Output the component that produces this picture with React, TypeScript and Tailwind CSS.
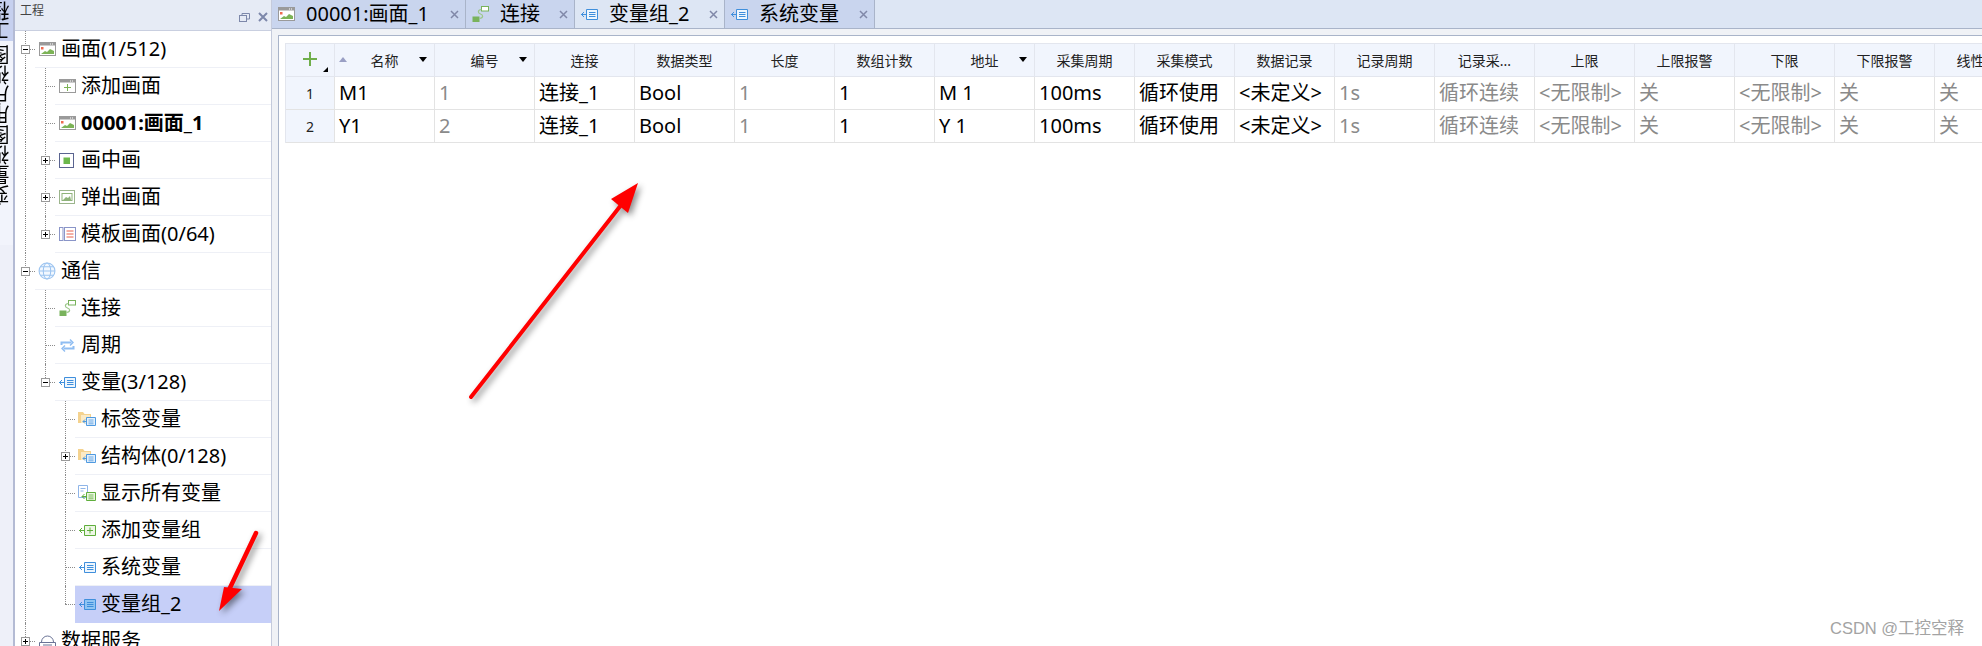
import type { ReactNode } from 'react';

const cjk = "font-['Noto_Sans','Noto_Sans_CJK_SC',sans-serif]";

// 树节点里的小图标
function ScreenIcon({ add }: { add?: boolean }) {
  return (
    <svg width="17" height="14" viewBox="0 0 17 14">
      <rect x="0.5" y="0.5" width="16" height="13" fill="#fff" stroke="#9a9a9a" />
      <rect x="1" y="1" width="15" height="2.5" fill="#9a9a9a" />
      <rect x="11" y="1.5" width="1" height="1" fill="#fff" />
      <rect x="13" y="1.5" width="1" height="1" fill="#fff" />
      {add ? (
        <path d="M8.500 5v7M5 8.500h7" stroke="#7cb356" strokeWidth="1" fill="none" />
      ) : (
        <>
          <rect x="2" y="5" width="2.5" height="2.5" fill="#ee6a50" />
          <path d="M2 12l4-3 2 1 3-3 4 2v3z" fill="#7cb356" />
        </>
      )}
    </svg>
  );
}

function PipIcon() {
  return (
    <svg width="16" height="15" viewBox="0 0 16 15">
      <rect x="0.5" y="0.5" width="14" height="14" fill="#fff" stroke="#5a6490" />
      <rect x="4.5" y="4.5" width="6.5" height="6.5" fill="#6cb84c" />
    </svg>
  );
}

function PopupIcon() {
  return (
    <svg width="16" height="14" viewBox="0 0 16 14">
      <rect x="0.5" y="0.5" width="15" height="13" fill="#fff" stroke="#9cb58c" />
      <rect x="3" y="3.5" width="10" height="7" fill="#fff" stroke="#8fb37a" />
      <path d="M4 10l3-3 2 1 2-2 1 4z" fill="#8fb37a" />
    </svg>
  );
}

function TemplateIcon() {
  return (
    <svg width="17" height="14" viewBox="0 0 17 14" fill="none">
      <rect x="0.5" y="0.5" width="3.5" height="13" stroke="#8a95c8" />
      <rect x="5.5" y="0.5" width="11" height="13" stroke="#8a95c8" />
      <path d="M7.500 4h7M7.500 7h7M7.500 10h7" stroke="#e8604c" />
    </svg>
  );
}

function GlobeIcon() {
  return (
    <svg width="18" height="18" viewBox="0 0 17 17" fill="none" stroke="#9cc4f0">
      <circle cx="8.5" cy="8.5" r="7.5" fill="#f2f8ff" />
      <ellipse cx="8.5" cy="8.5" rx="3.5" ry="7.5" />
      <path d="M1 8.500h15M2 4.500h13M2 12.500h13" />
    </svg>
  );
}

function ConnIcon() {
  return (
    <svg width="17" height="17" viewBox="0 0 17 17" fill="none">
      <rect x="0.5" y="10.5" width="7" height="5.5" fill="#79b35c" />
      <rect x="9.5" y="0.5" width="7" height="4.5" stroke="#79b35c" fill="#fff" />
      <path d="M9.500 3.500c-4 .5-4 3.500-1 4.500s3 4-1 4.500" stroke="#9cc78a" strokeWidth="1.2" />
    </svg>
  );
}

function CycleIcon() {
  return (
    <svg width="15" height="15" viewBox="0 0 15 15" fill="none" stroke="#8fbdf2" strokeWidth="2">
      <path d="M1.500 7V4.500h10" />
      <path d="M13.500 8v2.500h-10" />
      <path d="M10 1.500l3 3-3 3M5 7.500l-3 3 3 3" strokeWidth="1.4" />
    </svg>
  );
}

function VarIcon({ color = '#3f8fdc', fill = '#eef6fd' }: { color?: string; fill?: string }) {
  return (
    <svg width="17" height="11" viewBox="0 0 17 11" fill="none">
      <path d="M5.500.5h11v10h-11z" fill={fill} stroke={color} />
      <path d="M8 3.500h6.500M8 5.500h6.500M8 7.500h6.500" stroke={color} />
      <path d="M0 5.500h5.500M3 3l-2.500 2.500L3 8" stroke={color} />
    </svg>
  );
}

function AddVarIcon() {
  return (
    <svg width="17" height="11" viewBox="0 0 17 11" fill="none">
      <path d="M5.500.5h11v10h-11z" fill="#eef7e6" stroke="#5fae3c" />
      <path d="M11 2.500v6M8 5.500h6" stroke="#5fae3c" />
      <path d="M0 5.500h5.500M3 3l-2.500 2.500L3 8" stroke="#5fae3c" />
    </svg>
  );
}

function FolderVarIcon() {
  return (
    <svg width="18" height="16" viewBox="0 0 18 16" fill="none">
      <path d="M0 1h5l1.500 2H13v9H0z" fill="#f4d28e" />
      <path d="M3 4h9v8H3z" fill="#fbeac6" />
      <path d="M8.500 6.500h9v8h-9z" fill="#e4f0fc" stroke="#4f9ae0" />
      <path d="M10.500 9h5M10.500 11h5M10.500 12.800h5" stroke="#4f9ae0" strokeWidth="0.8" />
      <path d="M5 10.500h4M7 8.500l-2 2 2 2" stroke="#4f9ae0" />
    </svg>
  );
}

function AllVarIcon() {
  return (
    <svg width="18" height="17" viewBox="0 0 18 17" fill="none">
      <path d="M.5.500h9v12h-9z" fill="#fff" stroke="#8fb5e8" />
      <path d="M2.500 3.500h5M2.500 6h3" stroke="#8fb5e8" />
      <path d="M8.500 7.500h9v8h-9z" fill="#eaf6e2" stroke="#5fae3c" />
      <path d="M10.500 10h5M10.500 12h5M10.500 13.800h5" stroke="#5fae3c" strokeWidth="0.8" />
      <path d="M4 11.500h5M6.500 9l-2.500 2.500L6.500 14" stroke="#5fae3c" />
    </svg>
  );
}

function CloudIcon() {
  return (
    <svg width="17" height="17" viewBox="0 0 17 17" fill="none" stroke="#6a7396">
      <path d="M2.500 9a6 6 0 0 1 12 0" />
      <path d="M.5 9.500h16v5H.5z" fill="#fff" />
      <path d="M4 12h9" />
    </svg>
  );
}

type Row = {
  level: number;
  label: string;
  icon: ReactNode;
  exp?: '+' | '-';
  // 每一层的引导线: pipe = 贯穿, tee = 贯穿带横线, end = 到中间为止, none = 无
  guides: ('pipe' | 'tee' | 'end' | 'none')[];
  bold?: boolean;
  selected?: boolean;
};

const rows: Row[] = [
  { level: 0, label: '画面(1/512)', icon: <ScreenIcon />, exp: '-', guides: ['tee'] },
  { level: 1, label: '添加画面', icon: <ScreenIcon add />, guides: ['pipe', 'tee'] },
  { level: 1, label: '00001:画面_1', icon: <ScreenIcon />, guides: ['pipe', 'tee'], bold: true },
  { level: 1, label: '画中画', icon: <PipIcon />, exp: '+', guides: ['pipe', 'tee'] },
  { level: 1, label: '弹出画面', icon: <PopupIcon />, exp: '+', guides: ['pipe', 'tee'] },
  { level: 1, label: '模板画面(0/64)', icon: <TemplateIcon />, exp: '+', guides: ['pipe', 'end'] },
  { level: 0, label: '通信', icon: <GlobeIcon />, exp: '-', guides: ['tee'] },
  { level: 1, label: '连接', icon: <ConnIcon />, guides: ['pipe', 'tee'] },
  { level: 1, label: '周期', icon: <CycleIcon />, guides: ['pipe', 'tee'] },
  { level: 1, label: '变量(3/128)', icon: <VarIcon />, exp: '-', guides: ['pipe', 'end'] },
  { level: 2, label: '标签变量', icon: <FolderVarIcon />, guides: ['pipe', 'none', 'tee'] },
  { level: 2, label: '结构体(0/128)', icon: <FolderVarIcon />, exp: '+', guides: ['pipe', 'none', 'tee'] },
  { level: 2, label: '显示所有变量', icon: <AllVarIcon />, guides: ['pipe', 'none', 'tee'] },
  { level: 2, label: '添加变量组', icon: <AddVarIcon />, guides: ['pipe', 'none', 'tee'] },
  { level: 2, label: '系统变量', icon: <VarIcon />, guides: ['pipe', 'none', 'tee'] },
  { level: 2, label: '变量组_2', icon: <VarIcon fill="#8fc4f2" />, guides: ['pipe', 'none', 'end'], selected: true },
  { level: 0, label: '数据服务', icon: <CloudIcon />, exp: '+', guides: ['end'] },
];

function Guide({ type, exp }: { type: string; exp?: '+' | '-' }) {
  return (
    <div className="relative h-full w-[20px] shrink-0">
      {type !== 'none' && (
        <div
          className={`absolute left-[10px] top-0 border-l border-dotted border-[#8c8c8c] ${
            type === 'end' ? 'h-[18px]' : 'h-full'
          }`}
        />
      )}
      {(type === 'tee' || type === 'end') && (
        <div className="absolute left-[10px] top-[18px] w-[10px] border-t border-dotted border-[#8c8c8c]" />
      )}
      {exp && (
        <div className="absolute left-[6px] top-[14px] flex h-[9px] w-[9px] items-center justify-center border border-[#9a9a9a] bg-white">
          <div className="h-px w-[5px] bg-black" />
          {exp === '+' && <div className="absolute left-[3px] top-[1px] h-[5px] w-px bg-black" />}
        </div>
      )}
    </div>
  );
}

function TreeRow({ row }: { row: Row }) {
  return (
    <div className="flex h-[37px] shrink-0">
      {row.guides.map((g, i) => (
        <Guide key={i} type={g} exp={i === row.level ? row.exp : undefined} />
      ))}
      <div
        className={`flex min-w-0 flex-1 items-center border-b ${
          row.selected ? 'border-[#c6cff8] bg-[#c6cff8]' : 'border-[#eef0f6]'
        }`}
      >
        <div className="ml-[3px] mr-[5px] flex w-[18px] shrink-0 items-center justify-center">{row.icon}</div>
        <span className={`whitespace-nowrap text-[20px] leading-[26px] text-black ${row.bold ? 'font-bold' : ''}`}>
          {row.label}
        </span>
      </div>
    </div>
  );
}

function Sidebar() {
  return (
    <div className="flex h-full w-[257px] shrink-0 flex-col overflow-hidden border-r border-[#c5cbdc] bg-white">
      <div className="flex h-[31px] shrink-0 items-start justify-between border-b border-[#c9cfe0] bg-[#e6ebf5] pl-[5px] pr-[3px] pt-[3px]">
        <span className="text-[12px] leading-[16px] text-[#444]">工程</span>
        <div className="mt-[9px] flex items-center gap-[8px]">
          <svg width="11" height="9" viewBox="0 0 11 9" fill="none" stroke="#7d88aa">
            <rect x="0.5" y="2.500" width="7" height="6" />
            <path d="M3 2.500V.5h7.500v5.500H8" />
          </svg>
          <svg width="10" height="10" viewBox="0 0 10 10" fill="none" stroke="#7d88aa" strokeWidth="2">
            <path d="M1 1l8 8M9 1l-8 8" />
          </svg>
        </div>
      </div>
      {rows.map((r) => (
        <TreeRow key={r.label} row={r} />
      ))}
    </div>
  );
}

function LeftStrip() {
  return (
    <div className="flex h-full w-[15px] shrink-0 flex-col overflow-hidden border-r-2 border-[#b4bbd4] bg-[#eef0f9]">
      <div className="flex h-[41px] shrink-0 items-end justify-end overflow-hidden bg-[#c6d0ef] pr-[2px]">
        <span className="shrink-0 rotate-180 whitespace-nowrap text-[20px] leading-[20px] text-black [writing-mode:vertical-rl]">
          工程
        </span>
      </div>
      <div className="flex h-[164px] shrink-0 items-end justify-end overflow-hidden bg-[#f2f4fc] pr-[2px]">
        <span className="shrink-0 rotate-180 whitespace-nowrap text-[20px] leading-[20px] text-black [writing-mode:vertical-rl]">
          变量视图用户视图
        </span>
      </div>
      <div className="h-[40px] shrink-0 bg-[#f2f4fc]" />
    </div>
  );
}

const tabs = [
  { label: '00001:画面_1', w: 'w-[194px]', icon: <ScreenIcon /> },
  { label: '连接', w: 'w-[109px]', icon: <ConnIcon /> },
  { label: '变量组_2', w: 'w-[150px]', icon: <VarIcon />, active: true },
  { label: '系统变量', w: 'w-[150px]', icon: <VarIcon /> },
];

function TabBar() {
  return (
    <div className="flex h-[29px] shrink-0 border-b border-[#a9b4c9] bg-[#dde6f4]">
      {tabs.map((t) => (
        <div
          key={t.label}
          className={`flex h-full items-center border-r border-[#a9b4c9] pl-[6px] pr-[6px] ${t.w} ${
            t.active ? 'bg-[#dde6f4]' : 'bg-[#c9d5ee]'
          }`}
        >
          <div className="mr-[11px] flex w-[17px] shrink-0 items-center justify-center">{t.icon}</div>
          <span className="whitespace-nowrap text-[20px] leading-[26px] text-black">{t.label}</span>
          <svg className="ml-auto" width="9" height="9" viewBox="0 0 9 9" fill="none" stroke="#8088a8" strokeWidth="1.5">
            <path d="M1 1l7 7M8 1L1 8" />
          </svg>
        </div>
      ))}
    </div>
  );
}

const headers = [
  '名称', '编号', '连接', '数据类型', '长度', '数组计数', '地址', '采集周期', '采集模式',
  '数据记录', '记录周期', '记录采...', '上限', '上限报警', '下限', '下限报警', '线性转换',
];

const grayCols = [1, 4, 10, 11, 12, 13, 14, 15, 16];

const tableRows = [
  ['M1', '1', '连接_1', 'Bool', '1', '1', 'M 1', '100ms', '循环使用', '<未定义>', '1s', '循环连续', '<无限制>', '关', '<无限制>', '关', '关'],
  ['Y1', '2', '连接_1', 'Bool', '1', '1', 'Y 1', '100ms', '循环使用', '<未定义>', '1s', '循环连续', '<无限制>', '关', '<无限制>', '关', '关'],
];

function DataTable() {
  return (
    <div className="w-[1750px] border-l border-t border-[#e3e6ee]">
      <div className="flex h-[33px]">
        <div className="relative flex w-[49px] shrink-0 items-center justify-center border-b border-r border-[#e3e6ee] bg-[#f1f5fd]">
          <svg className="mb-[2px]" width="16" height="16" viewBox="0 0 16 16" stroke="#6fae4a" strokeWidth="2">
            <path d="M8 1v14M1 8h14" />
          </svg>
          <div className="absolute bottom-[4px] right-[6px] h-0 w-0 border-l-[5px] border-t-[5px] border-l-transparent border-t-black [transform:rotate(90deg)]" />
        </div>
        {headers.map((h, i) => (
          <div
            key={h}
            className="relative flex w-[100px] shrink-0 items-center justify-center border-b border-r border-[#e3e6ee] bg-[#f1f5fd] text-[14px] text-[#222]"
          >
            {i === 0 && (
              <div className="absolute left-[4px] top-[13px] h-0 w-0 border-x-[4px] border-b-[5px] border-x-transparent border-b-[#9a9fc4]" />
            )}
            <span className="whitespace-nowrap">{h}</span>
            {(i === 0 || i === 1 || i === 6) && (
              <div className="absolute right-[7px] top-[13px] h-0 w-0 border-x-[4.500px] border-t-[5px] border-x-transparent border-t-black" />
            )}
          </div>
        ))}
      </div>
      {tableRows.map((r, ri) => (
        <div key={ri} className="flex h-[33px]">
          <div className="flex w-[49px] shrink-0 items-center justify-center border-b border-r border-[#e3e3e3] bg-[#f1f5fd] text-[14px] text-[#222]">
            {ri + 1}
          </div>
          {r.map((c, i) => (
            <div
              key={i}
              className={`flex w-[100px] shrink-0 items-center overflow-hidden whitespace-nowrap border-b border-r border-[#e3e3e3] pl-[4px] text-[20px] ${
                grayCols.includes(i) ? 'text-[#8a8a8a]' : 'text-black'
              }`}
            >
              {c}
            </div>
          ))}
        </div>
      ))}
    </div>
  );
}

function Arrows() {
  return (
    <svg className="pointer-events-none absolute inset-0 h-full w-full drop-shadow-[3px_3px_3px_rgba(0,0,0,0.45)]" viewBox="0 0 1982 646">
      <path d="M471 397L625 200" stroke="#ff0000" strokeWidth="4" strokeLinecap="round" fill="none" />
      <path d="M638 183L611 199L628 213Z" fill="#ff0000" />
      <path d="M256 533L228 592" stroke="#ff0000" strokeWidth="4.500" strokeLinecap="round" fill="none" />
      <path d="M219 611L224 587L242 589Z" fill="#ff0000" />
    </svg>
  );
}

export default function App() {
  return (
    <div className={`relative flex h-[646px] w-[1982px] overflow-hidden bg-white ${cjk}`}>
      <LeftStrip />
      <Sidebar />
      <div className="flex min-w-0 flex-1 flex-col">
        <TabBar />
        <div className="flex min-h-0 flex-1 flex-col bg-[#f0f2f6] pl-[6px] pt-[6px]">
          <div className="min-h-0 flex-1 border-l border-t border-[#a9b4c9] bg-white pl-[6px] pt-[7px]">
            <DataTable />
          </div>
        </div>
      </div>
      <Arrows />
      <div className="absolute left-[1830px] top-[618px] whitespace-nowrap font-['Liberation_Sans','Noto_Sans_CJK_SC',sans-serif] text-[16.500px] leading-[20px] text-[#a3a3a3]">
        CSDN @工控空释
      </div>
    </div>
  );
}
